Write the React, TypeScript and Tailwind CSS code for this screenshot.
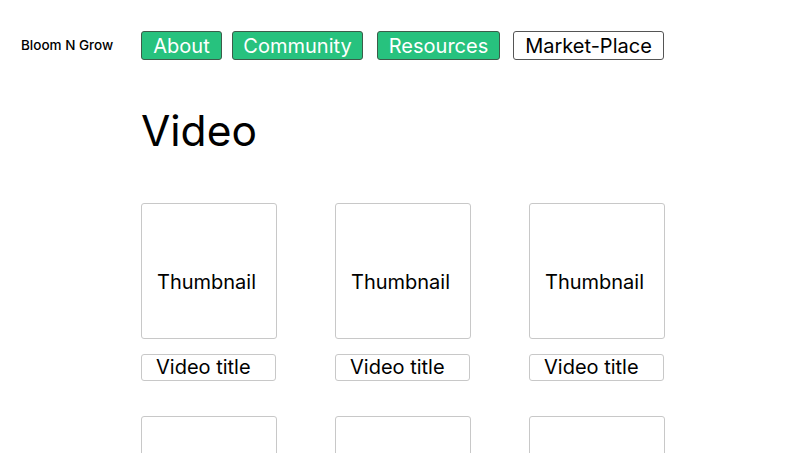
const navItems = [
  { label: "About", cls: "w-[81px]", active: true },
  { label: "Community", cls: "ml-[10px] w-[131px]", active: true },
  { label: "Resources", cls: "ml-[14px] w-[123px]", active: true },
  { label: "Market-Place", cls: "ml-[13px] w-[151px]", active: false },
];

const videos = Array.from({ length: 6 }, (_, i) => i);

export default function App() {
  return (
    <div className="h-[453px] overflow-hidden bg-white text-black font-['Inter','Liberation_Sans',sans-serif]">
      {/* Top bar */}
      <nav className="flex items-center pt-[31px] pl-[21px]">
        <div className="w-[120px] text-[13.5px] font-medium leading-none">Bloom N Grow</div>
        <div className="flex items-center">
          {navItems.map((item) => (
            <button
              key={item.label}
              className={
                item.active
                  ? `${item.cls} h-[29px] rounded-[3px] border border-[#3d5c4a] bg-[#27c27e] text-[20px] leading-none text-white`
                  : `${item.cls} h-[29px] rounded-[3px] border border-[#555555] bg-white text-[20px] leading-none text-black`
              }
            >
              {item.label}
            </button>
          ))}
        </div>
      </nav>

      {/* Content */}
      <main className="pl-[141px]">
        <h1 className="mt-[50px] text-[42.5px] leading-none font-normal">Video</h1>

        <div className="mt-[50px] grid grid-cols-[136px_136px_136px] gap-x-[58px] gap-y-[35px]">
          {videos.map((v) => (
            <div key={v} className="flex flex-col">
              <div className="flex h-[136px] w-[136px] items-center justify-center rounded-[3px] border border-[#c8c8c8] pt-[22px] pr-[5px] text-[20px]">
                Thumbnail
              </div>
              <div className="mt-[15px] flex h-[27px] w-[135px] items-center rounded-[3px] border border-[#c8c8c8] pl-[14px] text-[20px] leading-none">
                Video title
              </div>
            </div>
          ))}
        </div>
      </main>
    </div>
  );
}
